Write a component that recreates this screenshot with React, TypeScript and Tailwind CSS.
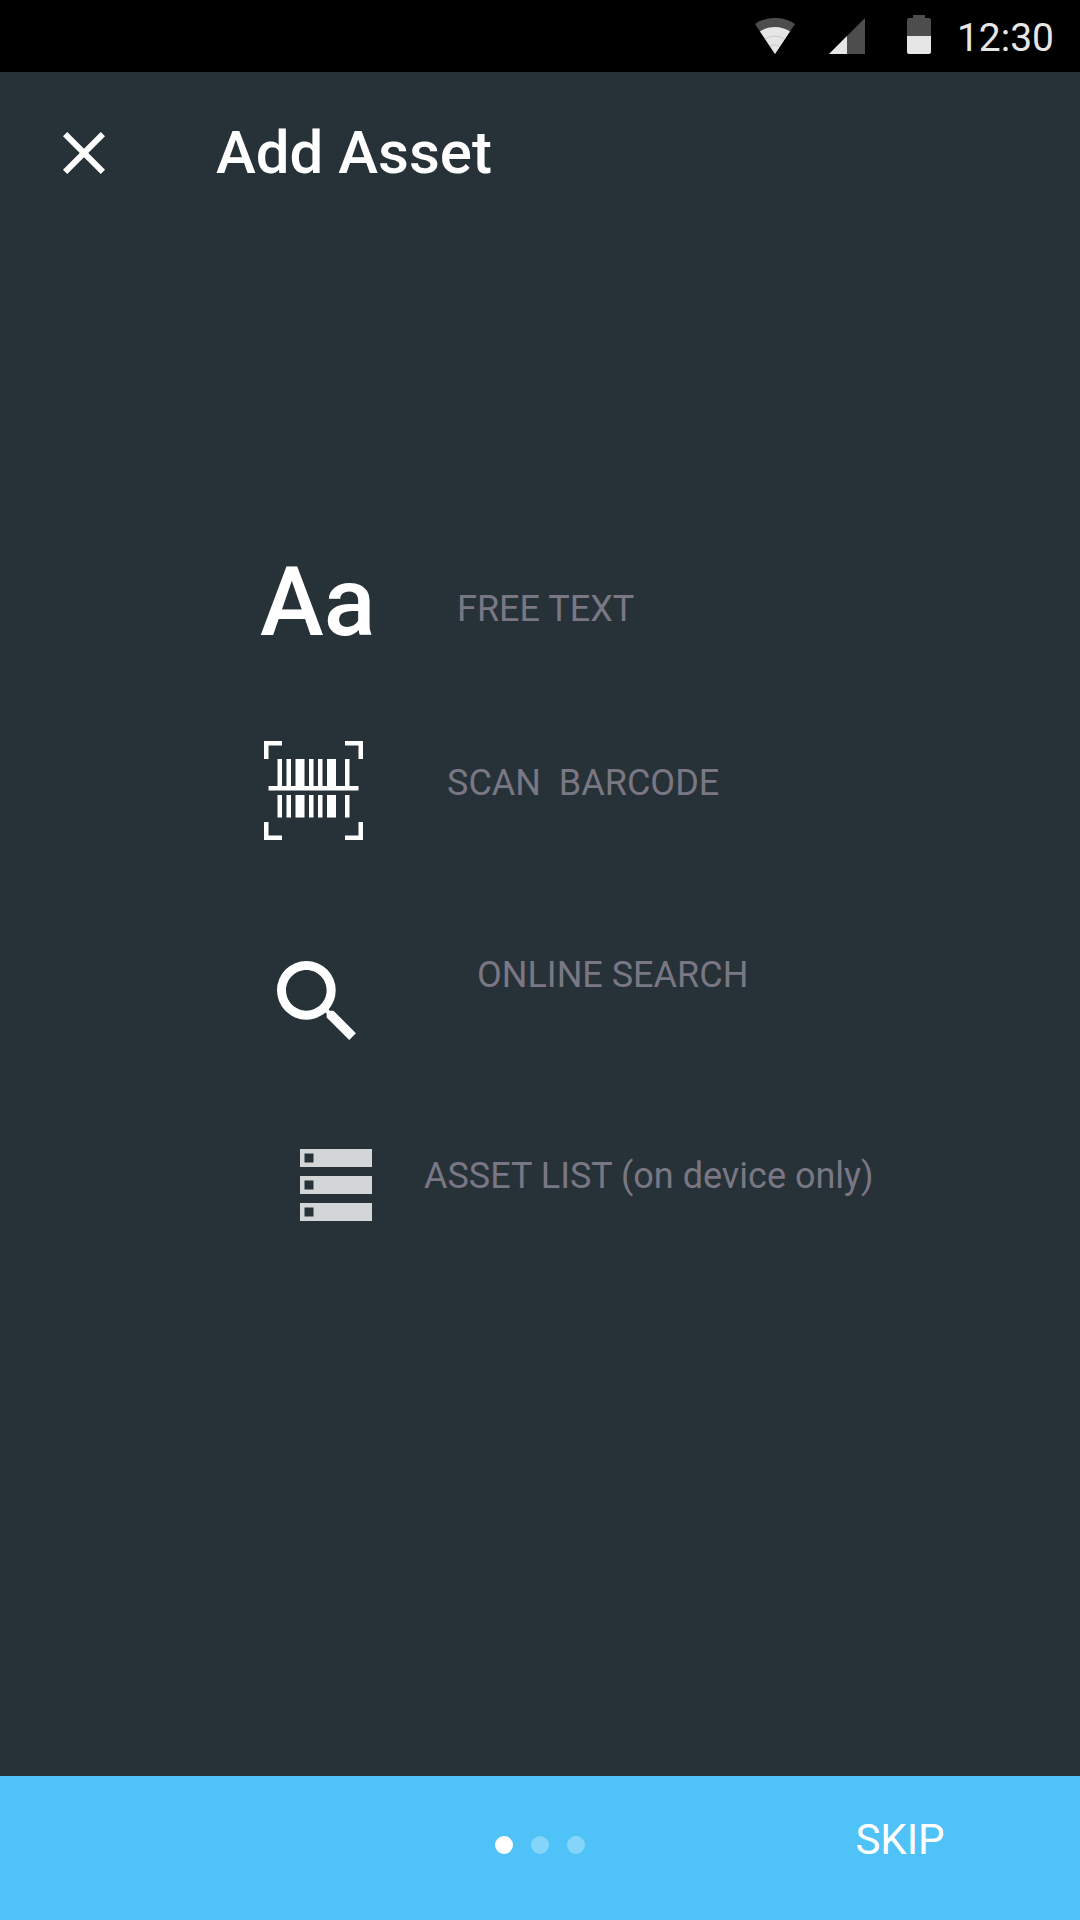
import React from "react";

function WifiIcon() {
  return (
    <svg width="40" height="36" viewBox="0 0 40 36" aria-hidden="true">
      <path d="M20 36 0 6A36 36 0 0 1 40 6Z" fill="#4d4d4d" />
      <path d="M20 36 5 13.5A27 27 0 0 1 35 13.5Z" fill="#e6e6e6" />
      <path d="M10 21A18 18 0 0 1 30 21M15 28.5A9 9 0 0 1 25 28.5" fill="none" stroke="#bdbdbd" strokeWidth="0.7" />
    </svg>
  );
}

function SignalIcon() {
  return (
    <svg width="36" height="36" viewBox="0 0 36 36" aria-hidden="true">
      <path d="M0 36 36 0V36Z" fill="#4d4d4d" />
      <path d="M0 36 18 18V36Z" fill="#e6e6e6" />
    </svg>
  );
}

function BatteryIcon() {
  return (
    <svg width="24" height="39" viewBox="0 0 24 39" aria-hidden="true">
      <path d="M6 0H18V3H22A2 2 0 0 1 24 5V21H0V5A2 2 0 0 1 2 3H6Z" fill="#4d4d4d" />
      <path d="M0 21H24V37A2 2 0 0 1 22 39H2A2 2 0 0 1 0 37Z" fill="#e6e6e6" />
    </svg>
  );
}

function CloseIcon() {
  return (
    <svg width="42" height="42" viewBox="5 5 14 14" fill="#fff" aria-hidden="true">
      <path d="M19 6.41 17.59 5 12 10.59 6.41 5 5 6.41 10.59 12 5 17.59 6.41 19 12 13.41 17.59 19 19 17.59 13.41 12z" />
    </svg>
  );
}

function BarcodeIcon() {
  return (
    <svg width="99" height="99" viewBox="0 0 22 22" fill="#fff" aria-hidden="true">
      <path d="M0 0h4v1H1v3H0zM18 0h4v4h-1V1h-3zM0 18h1v3h3v1H0zM21 18h1v4h-4v-1h3z" />
      <path d="M3 4h1v6H3zM5 4h1v6H5zM7 4h2v6H7zM10 4h1v6h-1zM12 4h1v6h-1zM14 4h2v6h-2zM18 4h1v6h-1z" />
      <path d="M1 10h20v1H1z" />
      <path d="M3 12h1v5H3zM5 12h1v5H5zM7 12h2v5H7zM10 12h1v5h-1zM12 12h1v5h-1zM14 12h2v5h-2zM18 12h1v5h-1z" />
    </svg>
  );
}

function SearchIcon() {
  return (
    <svg width="79" height="79" viewBox="3 3 17.5 17.5" fill="#fff" aria-hidden="true">
      <path d="M15.5 14h-.79l-.28-.27A6.471 6.471 0 0 0 16 9.5 6.5 6.5 0 1 0 9.5 16c1.61 0 3.09-.59 4.23-1.57l.27.28v.79l5 4.99L20.49 19l-4.99-5zm-6 0C7.01 14 5 11.99 5 9.5S7.01 5 9.5 5 14 7.01 14 9.5 11.99 14 9.5 14z" />
    </svg>
  );
}

function ListIcon() {
  return (
    <svg width="72" height="72" viewBox="0 0 72 72" fill="#d3d6d7" fillRule="evenodd" aria-hidden="true">
      <path d="M0 0h72v18H0zM4.5 4.5v9h9v-9z" />
      <path d="M0 27h72v18H0zM4.5 31.5v9h9v-9z" />
      <path d="M0 54h72v18H0zM4.5 58.5v9h9v-9z" />
    </svg>
  );
}

const options = [
  {
    label: "FREE TEXT",
    row: "",
    iconBox: "w-[197px]",
    labelBox: "pt-[31px]",
    icon: <span className="block text-[96px] leading-[96px] font-medium text-white">Aa</span>,
  },
  { label: "SCAN  BARCODE", row: "mt-[91px]", iconBox: "w-[187px] pl-1", labelBox: "pt-[18px]", icon: <BarcodeIcon /> },
  { label: "ONLINE SEARCH", row: "mt-[111px]", iconBox: "w-[217px] pt-[10px] pl-[17px]", labelBox: "", icon: <SearchIcon /> },
  { label: "ASSET LIST (on device only)", row: "mt-[109px]", iconBox: "w-[164px] pl-10", labelBox: "pt-[3px]", icon: <ListIcon /> },
];

export default function App() {
  return (
    <div className="flex min-h-screen flex-col bg-[#273238] font-['Roboto',sans-serif] [&_svg]:block">
      <div className="flex h-[72px] items-end justify-end bg-black pr-[26px] pb-[18px] text-[#e6e6e6]">
        <WifiIcon />
        <span className="ml-[34px]"><SignalIcon /></span>
        <span className="ml-[42px]"><BatteryIcon /></span>
        <span className="-mb-2 ml-[26px] text-[39px] leading-[48px]">12:30</span>
      </div>

      <header className="flex h-[162px] items-center pl-[63px] text-white">
        <button type="button" aria-label="Close">
          <CloseIcon />
        </button>
        <h1 className="ml-[111px] text-[60px] leading-[72px] font-medium">Add Asset</h1>
      </header>

      <main className="flex grow justify-center pt-[320px] pb-20">
        <ul className="w-[680px] pl-[60px]">
          {options.map((option) => (
            <li key={option.label} className={option.row}>
              <button type="button" className="flex items-start text-left">
                <span className={`shrink-0 ${option.iconBox}`}>{option.icon}</span>
                <span className={`text-[36px] leading-[48px] whitespace-pre text-[#7a7784] ${option.labelBox}`}>
                  {option.label}
                </span>
              </button>
            </li>
          ))}
        </ul>
      </main>

      <footer className="grid h-36 grid-cols-3 items-start bg-[#4fc3f7] text-white">
        <div className="col-start-2 flex justify-center gap-[18px] pt-[60px]">
          <span className="size-[18px] rounded-full bg-white" />
          <span className="size-[18px] rounded-full bg-white/30" />
          <span className="size-[18px] rounded-full bg-white/30" />
        </div>
        <button type="button" className="pt-10 text-center text-[42px] leading-[48px]">
          SKIP
        </button>
      </footer>
    </div>
  );
}
